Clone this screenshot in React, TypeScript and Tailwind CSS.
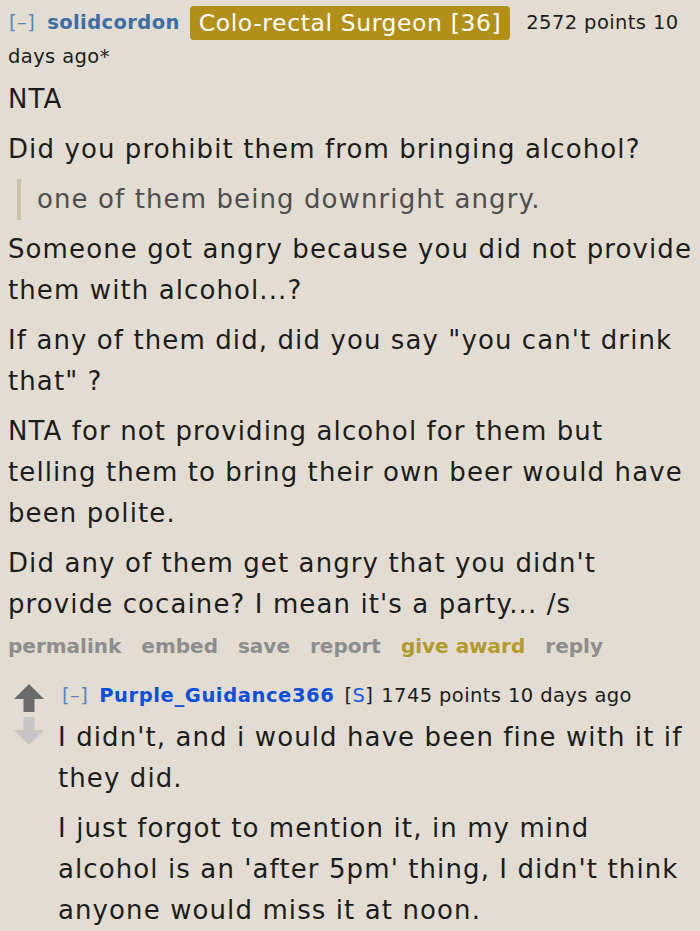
const font = { fontFamily: '"DejaVu Sans", Verdana, sans-serif' }

function Arrow({ up }: { up: boolean }) {
  return (
    <svg width="30" height="28" viewBox="0 0 30 28" className="block">
      {up ? (
        <path d="M15 0 L30 15 L20.5 15 L20.5 28 L9.5 28 L9.5 15 L0 15 Z" fill="#6b6b6b" />
      ) : (
        <path d="M15 28 L30 13 L20.5 13 L20.5 0 L9.5 0 L9.5 13 L0 13 Z" fill="#c6c6c6" />
      )}
    </svg>
  )
}

const ACTIONS = ['permalink', 'embed', 'save', 'report', 'give award', 'reply']

export default function App() {
  return (
    <div className="min-h-[931px] w-[700px] overflow-hidden bg-[#e2dcd2] text-[#1c1c1c]" style={font}>
      {/* parent comment */}
      <div className="pl-[8px] pr-1 pt-[6px]">
        <div className="text-[19.5px] leading-[33px] tracking-[0.4px]">
          <span className="ml-[1px] text-[#5b86b6]">[–]</span>
          <span className="ml-[12px] font-bold text-[#3b6ea3]">solidcordon</span>
          <span className="mx-[10px] inline-block rounded-[4px] bg-[#b18f19] px-[9px] align-top text-[23.5px] leading-[34px] tracking-[0.6px] text-white">
            Colo-rectal Surgeon [36]
          </span>
          <span className="ml-[6px]">2572 points 10</span> <span>days ago*</span>
        </div>

        <div className="mt-[6px] text-[26px] leading-[41px] tracking-[1.1px]">
          <p className="mb-[9px]">NTA</p>
          <p className="mb-[9px]">Did you prohibit them from bringing alcohol?</p>
          <blockquote className="mb-[9px] ml-[9px] border-l-[4px] border-[#c8c2ad] pl-[16px] text-[#4e4e4e]">
            <p>one of them being downright angry.</p>
          </blockquote>
          <p className="mb-[9px]">Someone got angry because you did not provide them with alcohol...?</p>
          <p className="mb-[9px]">If any of them did, did you say "you can't drink that" ?</p>
          <p className="mb-[9px]">
            NTA for not providing alcohol for them but telling them to bring their own beer would have been polite.
          </p>
          <p>Did any of them get angry that you didn't provide cocaine? I mean it's a party... /s</p>
        </div>

        <div className="mt-[6px] flex gap-[20px] text-[20px] font-bold leading-[30px] text-[#8d8d8d]">
          {ACTIONS.map((a) => (
            <span key={a} className={a === 'give award' ? 'text-[#b39a2c]' : ''}>
              {a}
            </span>
          ))}
        </div>

        {/* child comment */}
        <div className="mt-[19px] flex">
          <div className="flex w-[50px] shrink-0 flex-col pl-[6px] pt-[4px]">
            <Arrow up />
            <div className="mt-[5px]">
              <Arrow up={false} />
            </div>
          </div>
          <div className="min-w-0 flex-1">
            <div className="pl-[4px] text-[19.5px] leading-[32px] tracking-[0.4px]">
              <span className="text-[#5b86b6]">[–]</span>
              <span className="ml-[11px] font-bold tracking-[0.6px] text-[#0d4fd8]">Purple_Guidance366</span>
              <span className="ml-[10px]">
                [<span className="text-[#1a5be0]">S</span>]
              </span>
              <span className="ml-[8px]">1745 points 10 days ago</span>
            </div>
            <div className="mt-[5px] text-[26px] leading-[41px] tracking-[1.1px]">
              <p className="mb-[9px]">I didn't, and i would have been fine with it if they did.</p>
              <p>
                I just forgot to mention it, in my mind alcohol is an 'after 5pm' thing, I didn't think anyone would
                miss it at noon.
              </p>
            </div>
          </div>
        </div>
      </div>
    </div>
  )
}
